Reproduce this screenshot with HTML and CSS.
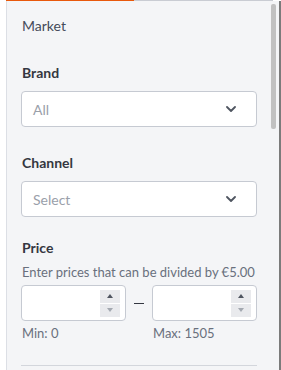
FILE: index.html
```html
<!DOCTYPE html>
<html lang="en">
<head>
  <meta charset="UTF-8">
  <title>Filters</title>
  <meta name="viewport" content="width=device-width, initial-scale=1">
  <link rel="stylesheet" href="styles.css">
</head>
<body>
  <div class="frame">
    <div class="tabline"><span class="tab-active"></span></div>
    <div class="panel-row">
      <div class="panel">
        <div class="section-title">Market</div>

        <div class="field">
          <label class="field-label">Brand</label>
          <div class="select">
            <span class="select-value">All</span>
            <svg class="chevron" width="10" height="6" viewBox="0 0 10 6"><path d="M1 1l4 4 4-4" fill="none" stroke="#4f5560" stroke-width="1.8" stroke-linecap="round" stroke-linejoin="round"/></svg>
          </div>
        </div>

        <div class="field">
          <label class="field-label">Channel</label>
          <div class="select">
            <span class="select-value">Select</span>
            <svg class="chevron" width="10" height="6" viewBox="0 0 10 6"><path d="M1 1l4 4 4-4" fill="none" stroke="#4f5560" stroke-width="1.8" stroke-linecap="round" stroke-linejoin="round"/></svg>
          </div>
        </div>

        <div class="field price">
          <label class="field-label">Price</label>
          <div class="help">Enter prices that can be divided by €5.00</div>
          <div class="range">
            <div class="range-col">
              <div class="num-input">
                <div class="spin">
                  <span class="spin-btn"><i class="tri up"></i></span>
                  <span class="spin-btn"><i class="tri down"></i></span>
                </div>
              </div>
              <div class="hint">Min: 0</div>
            </div>
            <div class="dash"></div>
            <div class="range-col">
              <div class="num-input">
                <div class="spin">
                  <span class="spin-btn"><i class="tri up"></i></span>
                  <span class="spin-btn"><i class="tri down"></i></span>
                </div>
              </div>
              <div class="hint">Max: 1505</div>
            </div>
          </div>
        </div>

        <div class="divider"></div>
      </div>
      <div class="scrollbar"><div class="thumb"></div></div>
      <div class="edge"></div>
    </div>
  </div>
</body>
</html>
```

FILE: styles.css
```css
html, body {
  margin: 0;
  padding: 0;
  background: #ffffff;
  height: 100%;
  overflow: hidden;
}
body {
  font-family: Lato, "Liberation Sans", sans-serif;
  color: #343741;
}
.frame {
  margin-left: 6px;
  width: 275px;
  height: 370px;
  display: flex;
  flex-direction: column;
}
.tabline {
  height: 1px;
  background: #c9ccd3;
  margin-right: 8px;
  flex: none;
}
.tab-active {
  display: block;
  width: 128px;
  height: 1px;
  background: #e8590c;
}
.panel-row {
  flex: 1;
  display: flex;
}
.panel {
  flex: 1;
  background: #f4f5f7;
  border-left: 1px solid #dcdfe5;
  padding: 15px 13px 0 14px;
  overflow: hidden;
}
.section-title {
  font-size: 14px;
  line-height: 20px;
  color: #454b5a;
  padding-left: 1px;
}
.field {
  margin-top: 27px;
}
.field + .field {
  margin-top: 26px;
}
.field.price {
  margin-top: 21px;
}
.field-label {
  display: block;
  font-size: 14px;
  font-weight: bold;
  line-height: 20px;
  color: #343741;
  padding-left: 1px;
}
.select {
  margin-top: 8px;
  height: 34px;
  background: #ffffff;
  border: 1px solid #c6cad2;
  border-radius: 4px;
  display: flex;
  align-items: center;
  justify-content: space-between;
  padding: 0 20px 0 11px;
}
.select-value {
  font-size: 14px;
  color: #9aa0aa;
}
.chevron {
  display: block;
}
.help {
  font-size: 13px;
  line-height: 17px;
  color: #69707d;
  margin-top: 6px;
  padding-left: 1px;
}
.range {
  display: flex;
  margin-top: 4px;
}
.range-col {
  width: 105px;
}
.num-input {
  height: 34px;
  background: #ffffff;
  border: 1px solid #c6cad2;
  border-radius: 4px;
  display: flex;
  justify-content: flex-end;
  align-items: center;
  padding-right: 5px;
}
.spin {
  display: flex;
  flex-direction: column;
  gap: 1px;
}
.spin-btn {
  width: 20px;
  height: 13px;
  background: #e9eaed;
  display: flex;
  align-items: center;
  justify-content: center;
}
.tri {
  width: 0;
  height: 0;
  border-left: 3px solid transparent;
  border-right: 3px solid transparent;
}
.tri.up {
  border-bottom: 4px solid #4f5560;
}
.tri.down {
  border-top: 4px solid #a3a8b0;
}
.dash {
  width: 10px;
  height: 1px;
  background: #343741;
  margin: 18px 8px 0;
}
.hint {
  font-size: 13px;
  line-height: 16px;
  color: #69707d;
  margin-top: 4px;
  padding-left: 1px;
}
.divider {
  height: 1px;
  background: #d3d6dc;
  margin-top: 24px;
}
.scrollbar {
  width: 8px;
  background: #f4f5f7;
  flex: none;
  padding-left: 1px;
}
.thumb {
  width: 5px;
  height: 125px;
  margin-top: 3px;
  background: #c1c1c1;
  border-radius: 2px;
}
.edge {
  width: 2px;
  background: #7b7b7b;
  flex: none;
}
```
